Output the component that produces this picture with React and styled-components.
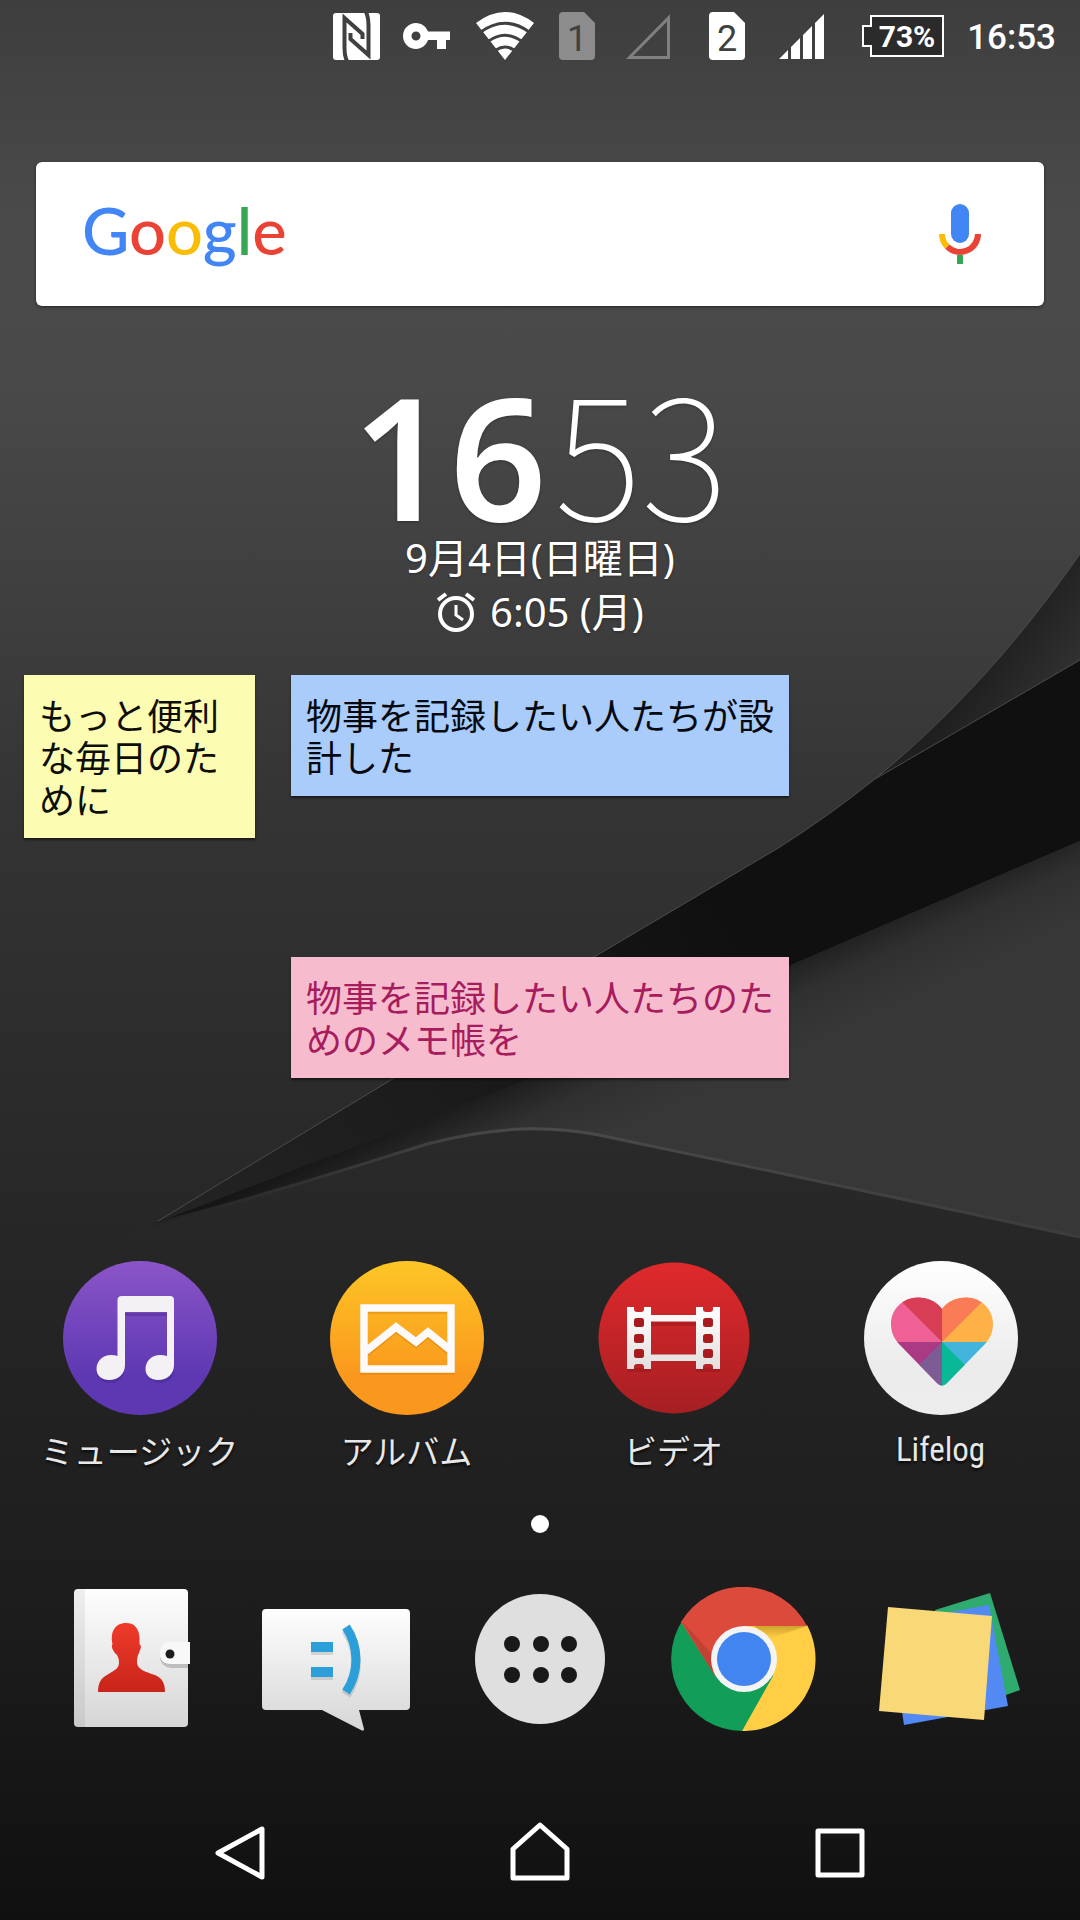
import React from 'react';
import styled, { createGlobalStyle } from 'styled-components';

const GlobalStyle = createGlobalStyle`
  * {
    box-sizing: border-box;
  }

  body {
    margin: 0;
    background: #111111;
    font-family: 'Noto Sans', 'Noto Sans CJK JP', sans-serif;
  }

  button {
    margin: 0;
    padding: 0;
    border: 0;
    background: none;
    color: inherit;
    font: inherit;
    cursor: pointer;
  }

  svg {
    display: block;
  }
`;

const Screen = styled.div`
  position: relative;
  min-height: 100vh;
  display: flex;
  flex-direction: column;
  overflow: hidden;
  color: #ffffff;
`;

const WallpaperSvg = styled.svg`
  position: absolute;
  inset: 0;
  width: 100%;
  height: 100%;
  z-index: -1;
`;

const StatusBar = styled.header`
  height: 72px;
  display: flex;
  align-items: center;
  justify-content: flex-end;
  padding-right: 24px;
`;

const StatusSlot = styled.span`
  width: ${({ $width }) => $width}px;
  display: flex;
  justify-content: center;
`;

const StatusTime = styled.time`
  padding-top: 4px;
  font: 500 35px/72px Roboto, sans-serif;
`;

const HomeGrid = styled.main`
  display: grid;
  grid-template-columns: repeat(4, 1fr);
  grid-auto-rows: minmax(282px, auto);
  padding: 0 6px;
  margin-top: 39px;
`;

const SearchBar = styled.div`
  grid-column: 1 / -1;
  align-self: start;
  display: flex;
  align-items: center;
  justify-content: space-between;
  height: 144px;
  margin: 51px 30px 0;
  padding: 0 60px 0 46px;
  border-radius: 6px;
  background: #ffffff;
  box-shadow: 0 1px 3px rgba(0, 0, 0, 0.5);
`;

const Logo = styled.button`
  padding-bottom: 8px;
  font: 500 65px/80px Lato, sans-serif;
`;

const LogoLetter = styled.span`
  color: ${({ $color }) => $color};
`;

const ClockWidget = styled.section`
  grid-column: 1 / -1;
  display: flex;
  flex-direction: column;
  align-items: center;
  text-shadow: 0 1px 3px rgba(0, 0, 0, 0.3);
`;

const ClockTime = styled.time`
  display: flex;
  align-items: baseline;
  gap: 8px;
  height: 124px;
`;

const ClockHour = styled.span`
  font-size: 170px;
  line-height: 124px;
  font-weight: 600;
`;

const ClockMinute = styled.span`
  font-family: 'Noto Sans CJK JP', sans-serif;
  font-size: 166px;
  line-height: 112px;
  font-weight: 100;
`;

const ClockLine = styled.div`
  display: flex;
  align-items: center;
  gap: 14px;
  font-size: 40px;
  font-weight: 400;
  line-height: 54px;

  &:first-of-type {
    margin-top: 14px;
  }
`;

const Note = styled.button`
  grid-row: ${({ $row }) => $row};
  grid-column: ${({ $column }) => $column};
  align-self: start;
  margin: 0 18px;
  padding: 18px 14px 19px 15px;
  background: ${({ $background }) => $background};
  color: ${({ $color }) => $color};
  box-shadow: 0 2px 2px rgba(0, 0, 0, 0.5);
  font: 400 36px/42px 'Noto Sans CJK JP', sans-serif;
  text-align: left;
`;

const AppShortcut = styled.button`
  grid-row: 5;
  display: flex;
  flex-direction: column;
  align-items: center;
  gap: 11px;
  padding-top: 22px;
`;

const AppLabel = styled.span`
  font: 400 33px/48px ${({ $latin }) => ($latin ? "'Roboto Condensed', 'Liberation Sans Narrow', Roboto" : "'Noto Sans CJK JP'")}, sans-serif;
  color: #e8e8e8;
  text-shadow: 0 2px 3px rgba(0, 0, 0, 0.8);
  white-space: nowrap;
`;

const PageDot = styled.div`
  width: 18px;
  height: 18px;
  margin: -6px auto 0;
  border-radius: 50%;
  background: #ffffff;
`;

const Dock = styled.section`
  display: grid;
  grid-template-columns: repeat(5, 1fr);
  justify-items: center;
  padding: 0 30px;
  margin-top: 54px;
`;

const NavBar = styled.nav`
  display: grid;
  grid-template-columns: repeat(3, 1fr);
  place-items: center;
  height: 136px;
  padding: 0 90px;
  margin-top: auto;
`;

const googleLetters = [
  ['G', '#4285f4'],
  ['o', '#ea4335'],
  ['o', '#fbbc05'],
  ['g', '#4285f4'],
  ['l', '#34a853'],
  ['e', '#ea4335'],
];

const notes = [
  { text: 'もっと便利な毎日のために', row: 3, column: '1', background: '#fcfcb2', color: '#0d0d0a' },
  { text: '物事を記録したい人たちが設計した', row: 3, column: '2 / 4', background: '#aaccfa', color: '#06090f' },
  { text: '物事を記録したい人たちのためのメモ帳を', row: 4, column: '2 / 4', background: '#f7bbce', color: '#a61c5c' },
];

const Wallpaper = () => (
  <WallpaperSvg viewBox="0 0 1080 1920" preserveAspectRatio="none" aria-hidden="true">
    <defs>
      <linearGradient id="wallBase" x1="0" y1="0" x2="0" y2="1">
        <stop offset="0" stopColor="#3e3e3e" />
        <stop offset="0.12" stopColor="#4b4b4b" />
        <stop offset="0.2" stopColor="#494949" />
        <stop offset="0.3" stopColor="#404040" />
        <stop offset="0.42" stopColor="#343434" />
        <stop offset="0.57" stopColor="#2b2b2b" />
        <stop offset="0.65" stopColor="#262626" />
        <stop offset="0.85" stopColor="#1c1c1c" />
        <stop offset="1" stopColor="#101010" />
      </linearGradient>
      <linearGradient id="wallFold" gradientUnits="userSpaceOnUse" x1="985" y1="660" x2="1050" y2="705">
        <stop offset="0" stopColor="#1f1f1f" />
        <stop offset="1" stopColor="#313131" />
      </linearGradient>
      <linearGradient id="wallBand" gradientUnits="userSpaceOnUse" x1="153" y1="1224" x2="700" y2="880">
        <stop offset="0" stopColor="#242424" />
        <stop offset="0.5" stopColor="#1b1b1b" />
        <stop offset="1" stopColor="#101010" />
      </linearGradient>
      <linearGradient id="wallSheet" gradientUnits="userSpaceOnUse" x1="340" y1="1110" x2="395" y2="1230">
        <stop offset="0" stopColor="#101010" />
        <stop offset="0.25" stopColor="#161616" />
        <stop offset="0.65" stopColor="#303030" />
        <stop offset="1" stopColor="#373737" />
      </linearGradient>
      <linearGradient id="wallFront" gradientUnits="userSpaceOnUse" x1="0" y1="1125" x2="0" y2="1330">
        <stop offset="0" stopColor="#2a2a2a" />
        <stop offset="1" stopColor="#242424" />
      </linearGradient>
      <linearGradient id="wallEdge" gradientUnits="userSpaceOnUse" x1="153" y1="0" x2="1080" y2="0">
        <stop offset="0" stopColor="#222222" />
        <stop offset="0.4" stopColor="#4a4a4a" />
        <stop offset="1" stopColor="#3c3c3c" />
      </linearGradient>
    </defs>
    <rect width="1080" height="1920" fill="url(#wallBase)" />
    <path d="M1080 554C1020 640 955 713 875 779L860 800L1080 700Z" fill="url(#wallFold)" />
    <path d="M153 1224L393 1079L594 957L780 847Q830 815 875 779L1080 660V841L791 965L517 1084Z" fill="url(#wallBand)" />
    <path d="M153 1224L594 957L780 847Q830 815 875 779C955 713 1020 640 1080 554M875 779L1080 660" fill="none" stroke="#4b4b4b" strokeWidth="1" />
    <path d="M153 1224L517 1084L791 965L1080 841V1237C900 1200 760 1168 599 1135C550 1126 500 1125 427 1144C350 1168 250 1200 153 1224Z" fill="url(#wallSheet)" />
    <path d="M153 1224C250 1200 350 1168 427 1144C500 1125 550 1126 599 1135C760 1168 900 1200 1080 1237V1340H0V1270Z" fill="url(#wallFront)" />
    <path d="M153 1224C250 1200 350 1168 427 1144C500 1125 550 1126 599 1135C760 1168 900 1200 1080 1237" fill="none" stroke="url(#wallEdge)" strokeWidth="3" />
  </WallpaperSvg>
);

const NfcIcon = () => (
  <svg width="47" height="47" viewBox="0 0 47 47" fill="none">
    <rect width="47" height="47" rx="3" fill="#ffffff" />
    <path d="M14 48C12 44 11.500 41 11.500 35V5L29.500 21V26" stroke="#404040" strokeWidth="4" />
    <path d="M33 -1C35 3 35.500 6 35.500 12V42L17.500 26V20" stroke="#404040" strokeWidth="4" />
  </svg>
);

const KeyIcon = () => (
  <svg width="47" height="26" viewBox="0 0 47 26">
    <path fill="#ffffff" fillRule="evenodd" d="M13 0C18.500 0 23 3.500 25 8.500H47V17H43V26H34V17H25C23 22.500 18.500 26 13 26A13 13 0 0 1 13 0ZM13 8.500A4.500 4.500 0 1 0 13 17.500A4.500 4.500 0 1 0 13 8.500Z" />
  </svg>
);

const WifiIcon = () => (
  <svg width="58" height="48" viewBox="0 0 58 48" fill="none">
    <path d="M0 11Q29 -11 58 11L29 48Z" fill="#ffffff" />
    <g stroke="#404040" strokeWidth="3">
      <path d="M4 20.500Q29 2 54 20.500" />
      <path d="M12 29.500Q29 17 46 29.500" />
      <path d="M20 38Q29 32 38 38" />
    </g>
  </svg>
);

const SimIcon = ({ number, fill }) => (
  <svg width="36" height="48" viewBox="0 0 36 48">
    <path d="M4 0H25L36 11V44Q36 48 32 48H4Q0 48 0 44V4Q0 0 4 0Z" fill={fill} />
    <text x="18" y="39" textAnchor="middle" fontFamily="Roboto, sans-serif" fontSize="36" fill="#404040">
      {number}
    </text>
  </svg>
);

const NoSignalIcon = () => (
  <svg width="44" height="45" viewBox="0 0 44 45">
    <path d="M3.500 43.500L42.500 4V43.500Z" fill="none" stroke="#808080" strokeWidth="3" />
  </svg>
);

const SignalIcon = () => (
  <svg width="45" height="45" viewBox="0 0 45 45" fill="#ffffff">
    <path d="M0 45L9 36V45ZM12 33L21 24V45H12ZM24 21L33 12V45H24ZM36 9L45 0V45H36Z" />
  </svg>
);

const BatteryIcon = () => (
  <svg width="82" height="42" viewBox="0 0 82 42">
    <path d="M9 1H81V41H9V31H1V11H9Z" fill="#2b2b2b" stroke="#ffffff" strokeWidth="2" />
    <text x="45" y="32" textAnchor="middle" fontFamily="Roboto, sans-serif" fontSize="30" fontWeight="700" fill="#ffffff">
      73%
    </text>
  </svg>
);

const MicIcon = () => (
  <svg width="48" height="60" viewBox="0 0 48 60" fill="none">
    <rect x="15" width="18" height="39" rx="9" fill="#4285f4" />
    <path d="M6 30A18 18 0 0 0 11.300 42.700" stroke="#fbbc05" strokeWidth="6" />
    <path d="M11.300 42.700A18 18 0 0 0 42 30" stroke="#ea4335" strokeWidth="6" />
    <path d="M24 51V60" stroke="#34a853" strokeWidth="6" />
  </svg>
);

const AlarmIcon = () => (
  <svg width="40" height="42" viewBox="0 0 40 42" fill="none" stroke="#ffffff">
    <circle cx="20" cy="23" r="16" strokeWidth="4" />
    <path d="M20 14V24L27 29" strokeWidth="3" />
    <path d="M2 9L10 3M38 9L30 3" strokeWidth="4" />
  </svg>
);

const MusicIcon = () => (
  <svg width="154" height="154" viewBox="0 0 154 154">
    <linearGradient id="music" x1="0" y1="0" x2="0" y2="1">
      <stop offset="0" stopColor="#8b55c8" />
      <stop offset="0.75" stopColor="#5d38b2" />
      <stop offset="1" stopColor="#5d38b2" />
    </linearGradient>
    <circle cx="77" cy="77" r="77" fill="url(#music)" />
    <g fill="#36207c" opacity="0.3" transform="translate(0 2)">
      <path d="M61 50H105V53H61Z" />
      <ellipse cx="47" cy="108" rx="14" ry="12" />
      <ellipse cx="97" cy="108" rx="14" ry="12" />
    </g>
    <path
      fill="#f3f1f4"
      d="M59 35H107Q111 35 111 39V104C111 113 104 119 95 119C88 119 82.500 115 82.500 108C82.500 100 89 94 97 94Q101 94 104 95V51H62V104C62 113 55 119 46 119C39 119 33.500 115 33.500 108C33.500 100 40 94 48 94Q52 94 54.500 95V39Q54.500 35 59 35Z"
    />
  </svg>
);

const AlbumIcon = () => (
  <svg width="154" height="154" viewBox="0 0 154 154">
    <linearGradient id="album" x1="0" y1="0" x2="0" y2="1">
      <stop offset="0" stopColor="#fdc626" />
      <stop offset="0.75" stopColor="#fa981d" />
      <stop offset="1" stopColor="#fa981d" />
    </linearGradient>
    <circle cx="77" cy="77" r="77" fill="url(#album)" />
    <g fill="none" strokeWidth="7.500">
      <path transform="translate(0 2)" d="M34 47H121V108H34ZM36 90L66 66L86 81L98 71L119 88" stroke="#c96a00" opacity="0.3" />
      <path d="M34 47H121V108H34ZM36 90L66 66L86 81L98 71L119 88" stroke="#fcfafa" />
    </g>
  </svg>
);

const strip = (x) =>
  `M${x} 46H${x + 7}V48Q${x + 7} 51 ${x + 10} 51H${x + 14}Q${x + 17} 51 ${x + 17} 48V46H${x + 24}V108H${x + 17}V106Q${x + 17} 103 ${x + 14} 103H${x + 10}Q${x + 7} 103 ${x + 7} 106V108H${x}Z`;

const VideoIcon = () => (
  <svg width="154" height="154" viewBox="0 0 154 154">
    <linearGradient id="video" x1="0" y1="0" x2="0" y2="1">
      <stop offset="0" stopColor="#df2a2c" />
      <stop offset="0.3" stopColor="#cf2629" />
      <stop offset="1" stopColor="#a61f23" />
    </linearGradient>
    <linearGradient id="film" x1="0" y1="0" x2="0" y2="1">
      <stop offset="0" stopColor="#ffffff" />
      <stop offset="1" stopColor="#e4dede" />
    </linearGradient>
    <circle cx="77" cy="77" r="75.500" fill="url(#video)" />
    <path d="M54 61H99V65H54ZM30 107H54V111H30ZM99 107H123V111H99Z" fill="#8c1519" opacity="0.4" />
    <path d={strip(30)} fill="url(#film)" />
    <path d={strip(99)} fill="url(#film)" />
    <path d="M53 54H100V60.500H53Z" fill="#fbf7f7" />
    <path d="M53 93.500H100V100H53Z" fill="#e9e4e4" />
    <g fill="#a81a1e">
      {[57, 73, 88].map((y) => (
        <React.Fragment key={y}>
          <rect x="37" y={y} width="10" height="9" rx="2.500" />
          <rect x="106" y={y} width="10" height="9" rx="2.500" />
        </React.Fragment>
      ))}
    </g>
  </svg>
);

const LifelogIcon = () => (
  <svg width="154" height="154" viewBox="0 0 154 154">
    <linearGradient id="lifelog" x1="0" y1="0" x2="0" y2="1">
      <stop offset="0" stopColor="#ffffff" />
      <stop offset="0.7" stopColor="#ebebeb" />
      <stop offset="1" stopColor="#ededed" />
    </linearGradient>
    <clipPath id="heart">
      <path d="M78 48C72 40 63 36.500 54 36.500C39 36.500 27 48 27 63C27 71 30 77 34 82L73 122Q78 127 83 122L122 82C126 77 129 71 129 63C129 48 117 36.500 102 36.500C93 36.500 84 40 78 48Z" />
    </clipPath>
    <circle cx="77" cy="77" r="77" fill="url(#lifelog)" />
    <g clipPath="url(#heart)">
      <rect x="20" y="30" width="58" height="51" fill="#ef6094" />
      <rect x="78" y="30" width="58" height="51" fill="#feb146" />
      <rect x="20" y="81" width="58" height="50" fill="#aa3a83" />
      <rect x="78" y="81" width="58" height="50" fill="#43b5dd" />
      <path d="M78 81V21H18Z" fill="#d73d55" />
      <path d="M78 81V21H138Z" fill="#f97c56" />
      <path d="M78 81L138 141H78Z" fill="#08b896" />
      <path d="M78 81V141H18Z" fill="#7d5c95" />
    </g>
  </svg>
);

const PaperGradient = ({ id }) => (
  <linearGradient id={id} x1="0" y1="0" x2="0" y2="1">
    <stop offset="0" stopColor="#fefefe" />
    <stop offset="1" stopColor="#d6d6d6" />
  </linearGradient>
);

const ContactsIcon = () => (
  <svg width="150" height="144" viewBox="0 0 150 144">
    <PaperGradient id="book" />
    <linearGradient id="person" x1="0" y1="0" x2="0" y2="1">
      <stop offset="0" stopColor="#ee3b2b" />
      <stop offset="1" stopColor="#c82419" />
    </linearGradient>
    <g transform="translate(17 1)">
      <rect y="1" width="114" height="138" rx="4" fill="url(#book)" />
      <path d="M4 1H11V139H4Q0 139 0 135V5Q0 1 4 1Z" fill="#000000" opacity="0.06" />
      <path
        fill="url(#person)"
        d="M52 35C61 35 65 41 65.500 50V56Q68 58 66 62Q65 66 64 67Q63 70 63 75C64 82 72 84 81 87C88 90 91 95 91 104H24C24 95 27 90 33 87C39 83 45 81 45 75Q45 70 43 67Q41 66 39 62Q37 58 38.500 56C36 44 41 35 52 35Z"
      />
      <path d="M97 60H114V80H97Q87 79 86 70Z" fill="#000000" opacity="0.18" />
      <path d="M97 54H116V76H97Q86 76 86 65Q86 54 97 54Z" fill="#f8f8f8" />
      <circle cx="96" cy="66" r="4.500" fill="#1c1c1c" />
    </g>
  </svg>
);

const MessageIcon = () => (
  <svg width="150" height="144" viewBox="0 0 150 144">
    <PaperGradient id="bubble" />
    <g transform="translate(1 21)">
      <path d="M4 1H144Q148 1 148 5V98Q148 102 144 102H97L102 121Q102 124 99 122L60 102H4Q0 102 0 98V5Q0 1 4 1Z" fill="url(#bubble)" />
      <g transform="translate(0 3)" opacity="0.12" fill="none" stroke="#000000" strokeWidth="10">
        <path d="M49 39H71M49 64H71M84 19A58 58 0 0 1 84 84" />
      </g>
      <path d="M49 39H71M49 64H71" stroke="#2c9fd9" strokeWidth="10" />
      <path d="M84 19A58 58 0 0 1 84 84" fill="none" stroke="#2c9fd9" strokeWidth="9" />
    </g>
  </svg>
);

const DrawerIcon = () => (
  <svg width="150" height="144" viewBox="0 0 150 144">
    <circle cx="75" cy="72" r="65" fill="#dfdfdf" />
    {[57, 88].map((y) => [47, 76, 104].map((x) => <circle key={`${x}-${y}`} cx={x} cy={y} r="8" fill="#191919" />))}
  </svg>
);

const ChromeIcon = () => (
  <svg width="150" height="144" viewBox="0 0 150 144">
    <linearGradient id="chromeShade" x1="0" y1="0" x2="0" y2="1">
      <stop offset="0" stopColor="#a07814" stopOpacity="0.5" />
      <stop offset="1" stopColor="#a07814" stopOpacity="0" />
    </linearGradient>
    <path d="M13 34A72 72 0 0 0 73 144L110 89L75 60Z" fill="#129d58" />
    <path d="M138 38A72 72 0 0 1 73 144L104 89L75 38Z" fill="#ffce44" />
    <path d="M85 39H138L102 51Z" fill="url(#chromeShade)" />
    <path d="M12 35A72 72 0 0 1 138 39H75V72L46 89Z" fill="#dc4a3c" />
    <path d="M13 34L46 89L42 66Z" fill="#000000" opacity="0.12" />
    <circle cx="75" cy="72" r="33" fill="#f4f4f4" />
    <circle cx="75" cy="72" r="27" fill="#4284f0" />
  </svg>
);

const KeepIcon = () => (
  <svg width="150" height="144" viewBox="0 0 150 144">
    <path d="M62 23L117 6L147 103L133 108L80 115Z" fill="#2fab70" />
    <path d="M16 36L116 18L135 119L31 138Z" fill="#5389f3" />
    <path d="M15 20L119 29L111 133L6 124Z" fill="#f9d878" />
  </svg>
);

const BackIcon = () => (
  <svg width="60" height="60" viewBox="0 0 60 60" fill="none" stroke="#ffffff" strokeWidth="5" strokeLinejoin="round">
    <path d="M8 31L52 7V55Z" />
  </svg>
);

const HomeIcon = () => (
  <svg width="60" height="60" viewBox="0 0 60 60" fill="none" stroke="#ffffff" strokeWidth="5" strokeLinejoin="round">
    <path d="M30 3L57 27V56H3V27Z" />
  </svg>
);

const RecentIcon = () => (
  <svg width="60" height="60" viewBox="0 0 60 60" fill="none" stroke="#ffffff" strokeWidth="5" strokeLinejoin="round">
    <rect x="8" y="9" width="44" height="44" />
  </svg>
);

const apps = [
  { label: 'ミュージック', Icon: MusicIcon },
  { label: 'アルバム', Icon: AlbumIcon },
  { label: 'ビデオ', Icon: VideoIcon },
  { label: 'Lifelog', Icon: LifelogIcon, latin: true },
];

const dockApps = [
  { name: '連絡先', Icon: ContactsIcon },
  { name: 'メッセージ', Icon: MessageIcon },
  { name: 'アプリ一覧', Icon: DrawerIcon },
  { name: 'Chrome', Icon: ChromeIcon },
  { name: 'メモ', Icon: KeepIcon },
];

const App = () => {
  return (
    <Screen lang="ja">
      <GlobalStyle />
      <Wallpaper />
      <StatusBar>
        <StatusSlot $width={70}><NfcIcon /></StatusSlot>
        <StatusSlot $width={70}><KeyIcon /></StatusSlot>
        <StatusSlot $width={88}><WifiIcon /></StatusSlot>
        <StatusSlot $width={56}><SimIcon number="1" fill="#8c8c8c" /></StatusSlot>
        <StatusSlot $width={86}><NoSignalIcon /></StatusSlot>
        <StatusSlot $width={72}><SimIcon number="2" fill="#ffffff" /></StatusSlot>
        <StatusSlot $width={76}><SignalIcon /></StatusSlot>
        <StatusSlot $width={128}><BatteryIcon /></StatusSlot>
        <StatusTime>16:53</StatusTime>
      </StatusBar>
      <HomeGrid>
        <SearchBar>
          <Logo type="button">
            {googleLetters.map(([letter, color], index) => (
              <LogoLetter key={index} $color={color}>{letter}</LogoLetter>
            ))}
          </Logo>
          <button type="button" aria-label="音声検索"><MicIcon /></button>
        </SearchBar>
        <ClockWidget>
          <ClockTime>
            <ClockHour>16</ClockHour>
            <ClockMinute>53</ClockMinute>
          </ClockTime>
          <ClockLine>9月4日(日曜日)</ClockLine>
          <ClockLine><AlarmIcon />6:05 (月)</ClockLine>
        </ClockWidget>
        {notes.map((note) => (
          <Note key={note.text} type="button" $row={note.row} $column={note.column} $background={note.background} $color={note.color}>
            {note.text}
          </Note>
        ))}
        {apps.map(({ label, Icon, latin }) => (
          <AppShortcut key={label} type="button">
            <Icon />
            <AppLabel $latin={latin}>{label}</AppLabel>
          </AppShortcut>
        ))}
      </HomeGrid>
      <PageDot />
      <Dock>
        {dockApps.map(({ name, Icon }) => (
          <button key={name} type="button" aria-label={name}><Icon /></button>
        ))}
      </Dock>
      <NavBar>
        <button type="button" aria-label="戻る"><BackIcon /></button>
        <button type="button" aria-label="ホーム"><HomeIcon /></button>
        <button type="button" aria-label="最近使ったアプリ"><RecentIcon /></button>
      </NavBar>
    </Screen>
  );
};

export default App;
